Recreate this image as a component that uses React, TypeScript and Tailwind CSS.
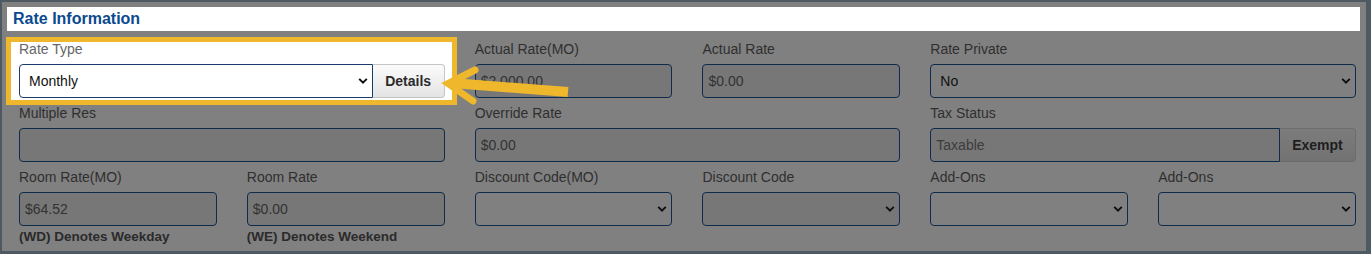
import React from "react";

const labelCls = "block text-[14px] leading-[18px] mb-[6px] text-[#2f2f2f]";
const boxCls =
  "h-[34px] w-full rounded-[4px] border border-[#0f2b4c] text-[14px] outline-none";

function Chevron({ color = "#111" }: { color?: string }) {
  return (
    <svg
      className="pointer-events-none absolute right-[5px] top-1/2 -translate-y-1/2"
      width="10"
      height="7"
      viewBox="0 0 10 7"
    >
      <path d="M1.2 1.4 L5 5.2 L8.8 1.4" fill="none" stroke={color} strokeWidth="2" />
    </svg>
  );
}

function TextField({
  label,
  value,
  className = "",
}: {
  label: string;
  value: string;
  className?: string;
}) {
  return (
    <div className={className}>
      <label className={labelCls}>{label}</label>
      <input
        readOnly
        value={value}
        className={`${boxCls} bg-[#777777] px-[5px] text-[#323232]`}
      />
    </div>
  );
}

function SelectField({
  label,
  value = "",
  disabled = false,
  className = "",
}: {
  label: string;
  value?: string;
  disabled?: boolean;
  className?: string;
}) {
  return (
    <div className={className}>
      <label className={labelCls}>{label}</label>
      <div className="relative">
        <select
          value={value}
          onChange={() => {}}
          className={`${boxCls} appearance-none pl-[9px] pr-6 text-[#111] ${
            disabled ? "bg-[#777777]" : "bg-[#808080]"
          }`}
        >
          <option value={value}>{value}</option>
        </select>
        <Chevron />
      </div>
    </div>
  );
}

export default function App() {
  return (
    <div
      className="relative w-[1371px] h-[254px] bg-[#4e5a62] pt-[2px] pl-[2px] pr-[5px] pb-[3px]"
      style={{ fontFamily: '"Liberation Sans", Arial, sans-serif' }}
    >
      <div className="h-full bg-[#808080] pt-[5px]">
        <div className="ml-[5px] mr-[6px] h-[24px] bg-white flex items-center pl-[6px]">
          <h2 className="text-[16px] font-bold text-[#0b4a8f]">Rate Information</h2>
        </div>

        <div className="mt-[9px] ml-[17px] w-[1337px] grid grid-cols-6 gap-x-[30px] gap-y-[6px]">
          {/* highlighted Rate Type */}
          <div className="relative col-span-2">
            <div className="absolute -left-[13px] -right-[12px] -top-[3px] -bottom-[7px] bg-white border-[5px] border-[#efb72c]" />
            <div className="relative">
              <label className="block text-[14px] leading-[18px] mb-[6px] text-[#666666]">
                Rate Type
              </label>
              <div className="flex">
                <div className="relative flex-1">
                  <select
                    value="Monthly"
                    onChange={() => {}}
                    className="h-[34px] w-full appearance-none rounded-l-[4px] border border-[#1a3c6c] bg-white pl-[9px] text-[14px] text-[#111] outline-none"
                  >
                    <option value="Monthly">Monthly</option>
                  </select>
                  <Chevron />
                </div>
                <button className="h-[34px] w-[72px] rounded-r-[4px] border border-l-0 border-[#c5c5c5] bg-gradient-to-b from-[#fbfbfb] to-[#e4e4e4] text-[14px] font-bold text-[#2b2b2b]">
                  Details
                </button>
              </div>
            </div>
          </div>
          <TextField label="Actual Rate(MO)" value="$2,000.00" />
          <TextField label="Actual Rate" value="$0.00" />
          <SelectField label="Rate Private" value="No" className="col-span-2" />

          <TextField label="Multiple Res" value="" className="col-span-2" />
          <TextField label="Override Rate" value="$0.00" className="col-span-2" />
          <div className="col-span-2">
            <label className={labelCls}>Tax Status</label>
            <div className="flex">
              <input
                readOnly
                value="Taxable"
                className="h-[34px] flex-1 min-w-0 rounded-l-[4px] border border-[#0f2b4c] bg-[#777777] px-[5px] text-[14px] text-[#3c3c3c] outline-none"
              />
              <button className="h-[34px] w-[76px] rounded-r-[4px] border border-l-0 border-[#6c6c6c] bg-gradient-to-b from-[#7c7c7c] to-[#727272] text-[14px] font-bold text-[#1e1e1e]">
                Exempt
              </button>
            </div>
          </div>

          <div>
            <TextField label="Room Rate(MO)" value="$64.52" />
            <p className="mt-[3px] text-[13.5px] leading-[16px] font-bold text-[#2b2b2b]">
              (WD) Denotes Weekday
            </p>
          </div>
          <div>
            <TextField label="Room Rate" value="$0.00" />
            <p className="mt-[3px] text-[13.5px] leading-[16px] font-bold text-[#2b2b2b]">
              (WE) Denotes Weekend
            </p>
          </div>
          <SelectField label="Discount Code(MO)" />
          <SelectField label="Discount Code" disabled />
          <SelectField label="Add-Ons" />
          <SelectField label="Add-Ons" />
        </div>
      </div>

      {/* callout arrow */}
      <svg
        className="pointer-events-none absolute left-0 top-0"
        width="1371"
        height="254"
        viewBox="0 0 1371 254"
      >
        <line x1="452" y1="83" x2="568" y2="92" stroke="#efb72c" strokeWidth="10" />
        <polyline
          points="475,70 448,83.5 473,101"
          fill="none"
          stroke="#efb72c"
          strokeWidth="7"
          strokeLinecap="round"
          strokeLinejoin="miter"
        />
      </svg>
    </div>
  );
}
